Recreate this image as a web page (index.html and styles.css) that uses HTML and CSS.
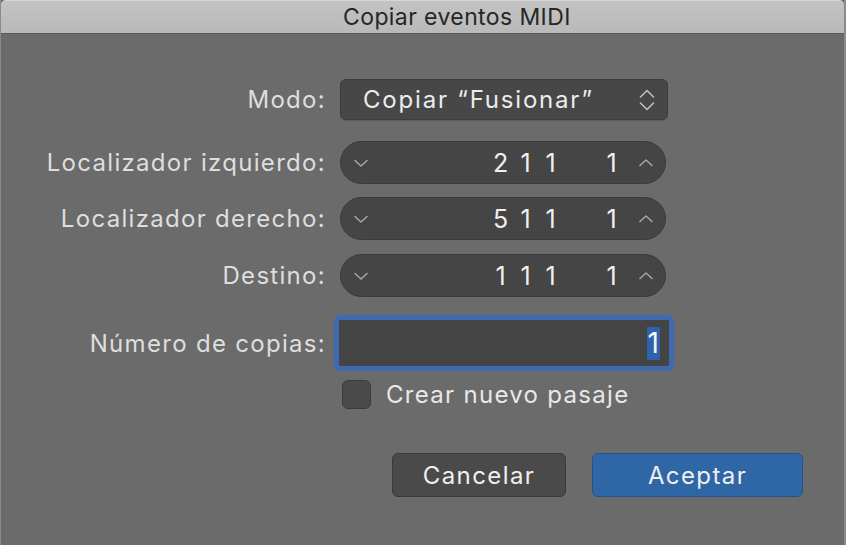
FILE: index.html
```html
<!DOCTYPE html>
<html lang="es">
<head>
<meta charset="utf-8">
<title>Copiar eventos MIDI</title>
<link rel="stylesheet" href="styles.css">
</head>
<body>
<div class="window">
  <div class="titlebar"><span class="title">Copiar eventos MIDI</span></div>
  <div class="content">
    <div class="row row-mode">
      <label class="label">Modo:</label>
      <div class="popup">
        <span class="popup-text">Copiar “Fusionar”</span>
        <svg class="updown" width="18" height="28" viewBox="0 0 18 28"><path d="M2.5 11 L9 4.5 L15.5 11 M2.5 17 L9 23.5 L15.5 17" fill="none" stroke="#bdbdbd" stroke-width="1.6" stroke-linecap="round" stroke-linejoin="round"/></svg>
      </div>
    </div>
    <div class="row row-step1">
      <label class="label">Localizador izquierdo:</label>
      <div class="stepper">
        <svg class="chev" width="16" height="10" viewBox="0 0 16 10"><path d="M2 2.5 L8 8 L14 2.5" fill="none" stroke="#a4a4a4" stroke-width="1.6" stroke-linecap="round" stroke-linejoin="round"/></svg>
        <span class="digits"><span class="d">2</span><span class="d">1</span><span class="d">1</span></span><span class="d last">1</span>
        <svg class="chev" width="16" height="10" viewBox="0 0 16 10"><path d="M2 7.5 L8 2 L14 7.5" fill="none" stroke="#a4a4a4" stroke-width="1.6" stroke-linecap="round" stroke-linejoin="round"/></svg>
      </div>
    </div>
    <div class="row row-step2">
      <label class="label">Localizador derecho:</label>
      <div class="stepper">
        <svg class="chev" width="16" height="10" viewBox="0 0 16 10"><path d="M2 2.5 L8 8 L14 2.5" fill="none" stroke="#a4a4a4" stroke-width="1.6" stroke-linecap="round" stroke-linejoin="round"/></svg>
        <span class="digits"><span class="d">5</span><span class="d">1</span><span class="d">1</span></span><span class="d last">1</span>
        <svg class="chev" width="16" height="10" viewBox="0 0 16 10"><path d="M2 7.5 L8 2 L14 7.5" fill="none" stroke="#a4a4a4" stroke-width="1.6" stroke-linecap="round" stroke-linejoin="round"/></svg>
      </div>
    </div>
    <div class="row row-step3">
      <label class="label">Destino:</label>
      <div class="stepper">
        <svg class="chev" width="16" height="10" viewBox="0 0 16 10"><path d="M2 2.5 L8 8 L14 2.5" fill="none" stroke="#a4a4a4" stroke-width="1.6" stroke-linecap="round" stroke-linejoin="round"/></svg>
        <span class="digits"><span class="d">1</span><span class="d">1</span><span class="d">1</span></span><span class="d last">1</span>
        <svg class="chev" width="16" height="10" viewBox="0 0 16 10"><path d="M2 7.5 L8 2 L14 7.5" fill="none" stroke="#a4a4a4" stroke-width="1.6" stroke-linecap="round" stroke-linejoin="round"/></svg>
      </div>
    </div>
    <div class="row row-copies">
      <label class="label">Número de copias:</label>
      <div class="field-ring">
        <div class="field"><span class="sel">1</span></div>
      </div>
    </div>
    <div class="row row-check">
      <span></span>
      <div class="check-wrap">
        <span class="checkbox"></span>
        <span class="check-label">Crear nuevo pasaje</span>
      </div>
    </div>
    <div class="buttons">
      <button class="btn btn-cancel">Cancelar</button>
      <button class="btn btn-ok">Aceptar</button>
    </div>
  </div>
</div>
</body>
</html>
```

FILE: styles.css
```css
* { box-sizing: border-box; }
html, body { margin: 0; padding: 0; }
body {
  width: 846px;
  height: 545px;
  overflow: hidden;
  background: #6b6b6b;
  font-family: Inter, Roboto, "Liberation Sans", sans-serif;
}
.window {
  width: 846px;
  height: 545px;
  background: #6b6b6b;
  border-left: 1px solid #8a8a8a;
  border-right: 2px solid #8a8a8a;
  display: flex;
  flex-direction: column;
}
.titlebar {
  height: 34px;
  background: linear-gradient(#c3c3c3, #b9b9b9);
  border-top: 1px solid #d6d6d6;
  border-bottom: 1px solid #585858;
  border-radius: 5px 5px 0 0;
  display: flex;
  align-items: center;
  padding-left: 342px;
}
.title {
  font-size: 23px;
  color: #262626;
  letter-spacing: 0.4px;
}
.content {
  display: flex;
  flex-direction: column;
}
.row {
  display: grid;
  grid-template-columns: 325px 326px;
  column-gap: 14px;
  align-items: center;
}
.label {
  text-align: right;
  font-size: 24px;
  color: #dedede;
  letter-spacing: 1.3px;
  white-space: nowrap;
}
.row-mode { margin-top: 45px; }
.row-step1 { margin-top: 21px; }
.row-step2 { margin-top: 13px; }
.row-step3 { margin-top: 14px; }
.row-copies { margin-top: 18px; column-gap: 8px; }
.row-check { margin-top: 9px; }

.popup {
  height: 41px;
  width: 328px;
  background: #474747;
  border: 1px solid #3c3c3c;
  border-radius: 6px;
  box-shadow: 0 1px 1px rgba(0,0,0,0.15);
  display: flex;
  align-items: center;
  padding: 0 11px 0 22px;
}
.popup-text {
  flex: 1;
  font-size: 24px;
  color: #ececec;
  letter-spacing: 1.8px;
  white-space: nowrap;
}
.updown { display: block; }

.stepper {
  height: 43px;
  background: #454545;
  border: 1px solid #3a3a3a;
  border-radius: 22px;
  display: flex;
  align-items: center;
  padding: 0 11px 0 12px;
}
.chev { display: block; flex: none; }
.digits {
  margin-left: auto;
  margin-right: 36px;
  display: flex;
}
.d {
  width: 25px;
  text-align: center;
  font-size: 25px;
  color: #f0f0f0;
}
.d.last { margin-right: 14px; }

.field-ring {
  width: 340px;
  height: 56px;
  border: 5px solid #3e6bb0;
  border-radius: 6px;
  background: #3e6bb0;
}
.field {
  height: 100%;
  background: #444444;
  border-radius: 1px;
  display: flex;
  align-items: center;
  justify-content: flex-end;
  padding-right: 9px;
}
.sel {
  background: #2d63ab;
  color: #f4f4f4;
  font-size: 28px;
  line-height: 33px;
  padding: 0 1px;
}

.check-wrap {
  display: flex;
  align-items: center;
  padding-left: 2px;
}
.checkbox {
  width: 29px;
  height: 29px;
  border-radius: 6px;
  background: #4a4a4a;
  border: 1px solid #3c3c3c;
}
.check-label {
  margin-left: 15px;
  font-size: 24px;
  color: #e8e8e8;
  letter-spacing: 1.3px;
  white-space: nowrap;
}

.buttons {
  display: flex;
  margin-top: 44px;
  padding-left: 391px;
  gap: 26px;
}
.btn {
  height: 44px;
  border-radius: 6px;
  font-family: inherit;
  font-size: 24px;
  letter-spacing: 1.4px;
  color: #efefef;
  cursor: default;
  padding: 0;
}
.btn-cancel {
  width: 174px;
  background: #4a4a4a;
  border: 1px solid #393939;
}
.btn-ok {
  width: 211px;
  background: #2f66a6;
  border: 1px solid #24528a;
}
```
